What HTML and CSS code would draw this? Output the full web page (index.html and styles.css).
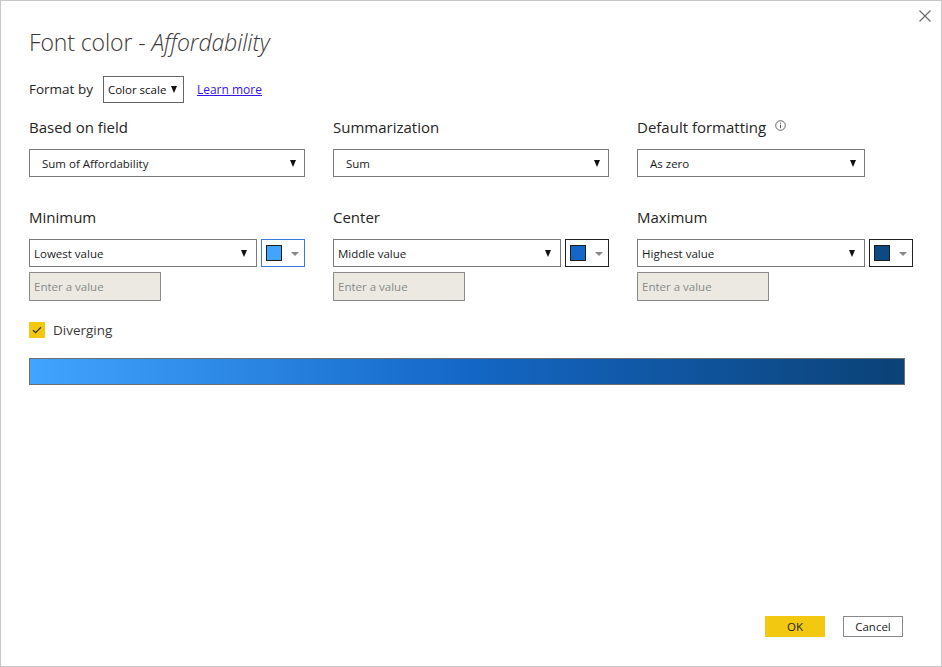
FILE: index.html
```html
<!DOCTYPE html>
<html lang="en">
<head>
<meta charset="utf-8">
<title>Font color - Affordability</title>
<link rel="stylesheet" href="styles.css">
</head>
<body>
<div class="dialog">
  <button class="close" aria-label="Close">
    <svg width="12" height="12" viewBox="0 0 12 12"><path d="M0.5 0.5L11.5 11.5M11.5 0.5L0.5 11.5" stroke="#666" stroke-width="1.1" fill="none"/></svg>
  </button>
  <h1 class="title">Font color - <em>Affordability</em></h1>

  <div class="format-row">
    <span class="format-label">Format by</span>
    <div class="mini-select">Color scale <span class="tri-black"></span></div>
    <a class="learn" href="#">Learn more</a>
  </div>

  <div class="grid top-grid">
    <div class="field">
      <div class="label">Based on field</div>
      <div class="select wide"><span>Sum of Affordability</span><span class="tri-black"></span></div>
    </div>
    <div class="field">
      <div class="label">Summarization</div>
      <div class="select wide"><span>Sum</span><span class="tri-black"></span></div>
    </div>
    <div class="field">
      <div class="label">Default formatting <span class="info"><svg width="11" height="11" viewBox="0 0 11 11"><circle cx="5.5" cy="5.5" r="4.8" stroke="#555" stroke-width="0.9" fill="none"/><path d="M5.5 4.6V8.2" stroke="#555" stroke-width="1"/><circle cx="5.5" cy="3.1" r="0.6" fill="#555"/></svg></span></div>
      <div class="select wide narrow"><span>As zero</span><span class="tri-black"></span></div>
    </div>
  </div>

  <div class="grid mid-grid">
    <div class="field">
      <div class="label">Minimum</div>
      <div class="pair">
        <div class="select value"><span>Lowest value</span><span class="tri-black"></span></div>
        <div class="color-btn focused"><span class="swatch c-min"></span><span class="tri-gray"></span></div>
      </div>
      <div class="input">Enter a value</div>
    </div>
    <div class="field">
      <div class="label">Center</div>
      <div class="pair">
        <div class="select value"><span>Middle value</span><span class="tri-black"></span></div>
        <div class="color-btn"><span class="swatch c-mid"></span><span class="tri-gray"></span></div>
      </div>
      <div class="input">Enter a value</div>
    </div>
    <div class="field">
      <div class="label">Maximum</div>
      <div class="pair">
        <div class="select value"><span>Highest value</span><span class="tri-black"></span></div>
        <div class="color-btn"><span class="swatch c-max"></span><span class="tri-gray"></span></div>
      </div>
      <div class="input">Enter a value</div>
    </div>
  </div>

  <label class="check-row">
    <span class="checkbox"><svg width="10" height="8" viewBox="0 0 10 8"><path d="M1 4.2L3.6 6.6L9 1.2" stroke="#3a3a3a" stroke-width="1.3" fill="none"/></svg></span>
    <span class="check-text">Diverging</span>
  </label>

  <div class="gradient"></div>

  <div class="spacer"></div>

  <div class="buttons">
    <button class="btn ok">OK</button>
    <button class="btn cancel">Cancel</button>
  </div>
</div>
</body>
</html>
```
FILE: styles.css
```css
* { box-sizing: border-box; }
html, body { margin: 0; padding: 0; background: #fff; }
body { font-family: "Open Sans", "Noto Sans", "Liberation Sans", sans-serif; color: #252423; }

.dialog {
  position: relative;
  width: 942px;
  height: 667px;
  border: 1px solid #c8c8c8;
  padding: 0 36px 0 28px;
  display: flex;
  flex-direction: column;
}

.close {
  position: absolute;
  top: 8px;
  right: 9px;
  width: 14px;
  height: 14px;
  padding: 1px;
  border: 0;
  background: transparent;
  display: flex;
}

.title {
  margin: 25px 0 0 0;
  height: 32px;
  font-size: 23px;
  font-weight: 300;
  line-height: 32px;
  color: #3b3a39;
  letter-spacing: -0.1px;
}
.title em { font-style: italic; }

.format-row {
  margin-top: 17px;
  display: flex;
  align-items: center;
  height: 28px;
}
.format-label { font-size: 13.5px; color: #252423; margin-right: 10px; }
.mini-select {
  height: 27px;
  width: 81px;
  border: 1px solid #666;
  display: flex;
  align-items: center;
  padding: 1px 0 0 4px;
  font-size: 11.5px;
  color: #111;
  gap: 5px;
}
.learn {
  margin-left: 13px;
  font-size: 12px;
  color: #3317e6;
  text-decoration: underline;
}

.grid {
  display: grid;
  grid-template-columns: 276px 276px 276px;
  column-gap: 28px;
}
.top-grid { margin-top: 13px; }
.mid-grid { margin-top: 29px; }

.label {
  height: 22px;
  font-size: 15px;
  line-height: 22px;
  color: #252423;
  display: flex;
  align-items: center;
}
.info { margin-left: 9px; display: inline-flex; margin-top: -4px; }

.select {
  margin-top: 11px;
  height: 28px;
  border: 1px solid #7a7a7a;
  display: flex;
  align-items: center;
  justify-content: space-between;
  font-size: 11.5px;
  color: #1a1a1a;
  background: #fff;
}
.wide { width: 276px; padding: 0 8px 0 12px; }
.narrow { width: 228px; }

.tri-black {
  width: 0; height: 0;
  border-left: 3.5px solid transparent;
  border-right: 3.5px solid transparent;
  border-top: 7px solid #111;
  flex: none;
}
.tri-gray {
  width: 0; height: 0;
  border-left: 4px solid transparent;
  border-right: 4px solid transparent;
  border-top: 4px solid #888;
  flex: none;
  margin-top: 1px;
}

.pair {
  margin-top: 11px;
  display: flex;
  gap: 4px;
  height: 28px;
}
.pair .select { margin-top: 0; }
.value { width: 228px; padding: 0 9px 0 4px; }

.color-btn {
  width: 44px;
  height: 28px;
  border: 1px solid #222;
  display: flex;
  align-items: center;
  padding: 0 0 0 4px;
  gap: 9px;
}
.color-btn.focused { border: 1px solid #3b78d8; }
.swatch { width: 16px; height: 16px; border: 1px solid #1c1c1c; flex: none; }
.c-min { background: #41a4ff; }
.c-mid { background: #1467c6; }
.c-max { background: #0d4a84; }

.input {
  margin-top: 5px;
  width: 132px;
  height: 29px;
  border: 1px solid #8a8a8a;
  background: #ebe9e2;
  font-size: 11.5px;
  color: #8a8a8a;
  display: flex;
  align-items: center;
  padding: 0 0 0 4px;
}

.check-row {
  margin-top: 20px;
  display: flex;
  align-items: center;
  height: 17px;
}
.checkbox {
  width: 16px;
  height: 16px;
  background: #f2c811;
  display: flex;
  align-items: center;
  justify-content: center;
}
.check-text { margin-left: 8px; font-size: 13.5px; color: #3b3a39; }

.gradient {
  margin-top: 20px;
  width: 876px;
  height: 27px;
  border: 1px solid #6e6e6e;
  background: linear-gradient(to right, #41a4ff 0%, #1467c6 50%, #0b4276 100%);
}

.spacer { flex: 1; }

.buttons {
  display: flex;
  justify-content: flex-end;
  gap: 18px;
  margin-bottom: 29px;
  margin-right: 2px;
}
.btn {
  height: 21px;
  width: 60px;
  font-family: inherit;
  font-size: 11.5px;
  padding: 0;
  color: #252423;
}
.ok { background: #f2c811; border: 0; }
.cancel { background: #fff; border: 1px solid #888; }
```
